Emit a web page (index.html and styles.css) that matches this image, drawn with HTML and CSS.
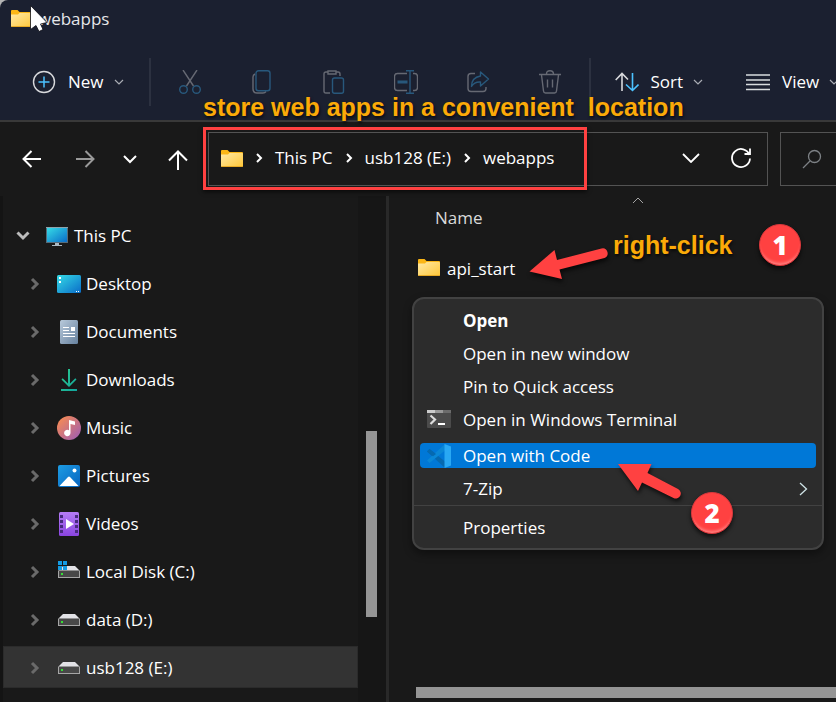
FILE: index.html
```html
<!DOCTYPE html>
<html lang="en">
<head>
<meta charset="utf-8">
<title>webapps</title>
<link rel="stylesheet" href="styles.css">
</head>
<body>
<svg class="defs" aria-hidden="true">
  <defs>
    <linearGradient id="gold" x1="0" y1="0" x2="1" y2="1"><stop offset="0" stop-color="#ffe9a6"/><stop offset="1" stop-color="#ffc738"/></linearGradient>
    <linearGradient id="screen" x1="0" y1="0" x2="1" y2="1"><stop offset="0" stop-color="#35dbe6"/><stop offset="1" stop-color="#0a6cc8"/></linearGradient>
    <linearGradient id="paper" x1="0" y1="0" x2="1" y2="1"><stop offset="0" stop-color="#b9cadb"/><stop offset="1" stop-color="#66819e"/></linearGradient>
    <linearGradient id="green" x1="0" y1="0" x2="1" y2="1"><stop offset="0" stop-color="#2ccb8b"/><stop offset="1" stop-color="#12a59f"/></linearGradient>
    <linearGradient id="note" x1="0" y1="0" x2="1" y2="1"><stop offset="0.1" stop-color="#f58a55"/><stop offset="1" stop-color="#9a5bb8"/></linearGradient>
    <linearGradient id="sky" x1="0" y1="0" x2="1" y2="1"><stop offset="0" stop-color="#1d9de4"/><stop offset="1" stop-color="#0764bf"/></linearGradient>
    <linearGradient id="film" x1="0" y1="0" x2="0" y2="1"><stop offset="0" stop-color="#b57cf5"/><stop offset="1" stop-color="#8a45e0"/></linearGradient>
    <symbol id="folder" viewBox="0 0 22 17"><path d="M0 1q0-1 1-1h5.500l2 2H21q1 0 1 1v4H0z" fill="#fbb616"/><path d="M0 4.500h7l1.500-1.500H21q1 0 1 1v12q0 1-1 1H1q-1 0-1-1z" fill="url(#gold)"/><path d="M.5 16.500h21" stroke="#e8aa25"/></symbol>
    <symbol id="drive" viewBox="0 0 22 14"><path d="M5 1h12l4.500 4.500h-21z" fill="#e2e2e6"/><path d="M0 5.500h22V13H0z" fill="#a6a6a6"/><path d="M1 6h20v6H1z" fill="#484848"/><path d="M3 8h2v2H3z" fill="#35e035"/></symbol>
    <symbol id="caret" viewBox="0 0 10 14"><path d="M2 2l5 5-5 5" fill="none" stroke="currentColor" stroke-width="3"/></symbol>
    <symbol id="down" viewBox="0 0 10 6"><path d="M1 1l4 4 4-4" fill="none" stroke="currentColor" stroke-width="1.200"/></symbol>
    <symbol id="crumb" viewBox="0 0 8 10"><path d="M2 1l4 4-4 4" fill="none" stroke="currentColor" stroke-width="2"/></symbol>
  </defs>
</svg>

<div class="window">
  <header class="titlebar">
    <svg class="ic-folder" aria-hidden="true"><use href="#folder"/></svg>
    <h1>webapps</h1>
    <svg class="cursor" viewBox="0 0 18 27" aria-hidden="true"><path d="M.5.500V24.500L6 20.500 9 26.500l4-2-2.500-5.500 6.500-1.500z" fill="#fff" stroke="#0b0d14" stroke-width=".8"/></svg>
  </header>

  <div class="toolbar" role="toolbar" aria-label="Commands">
    <button class="labelled new" type="button">
      <svg class="ic-24" viewBox="0 0 24 24" aria-hidden="true"><circle cx="12" cy="12" r="10.500" fill="none" stroke="#d8d9dc" stroke-width="1.400"/><path d="M12 6.500v11M6.500 12h11" stroke="#4cc2ff" stroke-width="1.500"/></svg>
      <span>New</span><svg class="ic-down" aria-hidden="true"><use href="#down"/></svg>
    </button>
    <span class="rule"></span>
    <button class="tool" type="button" aria-label="Cut"><svg class="ic-24" viewBox="0 0 24 24" fill="none" stroke-width="1.400"><path d="M5 0l10.500 16M19 0L8.500 16" stroke="#666973"/><circle cx="5.500" cy="19.500" r="3.800" stroke="#28587c"/><circle cx="18.500" cy="19.500" r="3.800" stroke="#28587c"/></svg></button>
    <button class="tool" type="button" aria-label="Copy"><svg class="ic-24" viewBox="0 0 24 24" fill="none" stroke-width="1.400"><path d="M5 4q-2 1-2 3v12q0 4 4 4h6q2 0 3-1.500" stroke="#666973"/><rect x="6" y=".8" width="14" height="20" rx="2.500" stroke="#28587c"/></svg></button>
    <button class="tool" type="button" aria-label="Paste"><svg class="ic-24" viewBox="0 0 24 24" fill="none" stroke-width="1.400"><path d="M8 23H4q-2 0-2-2V4q0-2 2-2h2M14 2h2q2 0 2 2v2M6 1h8v3H6z" stroke="#666973"/><rect x="10.500" y="8" width="11" height="15.200" rx="2" stroke="#28587c"/></svg></button>
    <button class="tool" type="button" aria-label="Rename"><svg class="ic-24" viewBox="0 0 24 24" fill="none" stroke-width="1.400"><path d="M13 3.500H3.500q-3 0-3 3v11q0 3 3 3H13M19 3.500h1.500q3 0 3 3v11q0 3-3 3H19" stroke="#666973"/><path d="M12 .7h8M12 23.300h8M16 1v22" stroke="#28587c"/><path d="M3.500 12h10" stroke="#28587c" stroke-width="3"/></svg></button>
    <button class="tool" type="button" aria-label="Share"><svg class="ic-24" viewBox="0 0 24 24" fill="none" stroke-width="1.400"><path d="M9 3.500H5q-3 0-3 3v12q0 3 3 3h12q3 0 3-3V17" stroke="#666973"/><path d="M14.500 2l8 7-8 7v-4q-6-.5-9 4.500 0-9 9-10.500z" stroke="#28587c" stroke-linejoin="round"/></svg></button>
    <button class="tool" type="button" aria-label="Delete"><svg class="ic-24" viewBox="0 0 24 24" fill="none" stroke="#666973" stroke-width="1.400"><path d="M1 4.500h22M8.500 4q0-3.300 3.500-3.300T15.500 4M3.500 5l2 16q.2 2 2 2h9q1.800 0 2-2l2-16M9.500 9.500v8M14.500 9.500v8"/></svg></button>
    <span class="rule"></span>
    <button class="labelled sort" type="button">
      <svg class="ic-24" viewBox="0 0 24 24" fill="none" stroke-width="1.600" aria-hidden="true"><path d="M7 21V4M.7 10L7 3.500l6 6" stroke="#d8d9dc"/><path d="M17.500 3v17M11 14.500l6.500 6 6-6" stroke="#4cc2ff"/></svg>
      <span>Sort</span><svg class="ic-down" aria-hidden="true"><use href="#down"/></svg>
    </button>
    <button class="labelled view" type="button">
      <svg class="ic-24" viewBox="0 0 24 24" stroke="#d8dcde" stroke-width="1.500" aria-hidden="true"><path d="M0 5h24M0 10h24M0 14.500h24M0 19.500h24"/></svg>
      <span>View</span><svg class="ic-down" aria-hidden="true"><use href="#down"/></svg>
    </button>
    <p class="callout callout-top">store web apps in a convenient&nbsp; location</p>
  </div>

  <div class="navbar">
    <nav class="history" aria-label="History">
      <button type="button" aria-label="Back"><svg class="ic-24" viewBox="0 0 24 24"><path d="M21 12H3.500M11.500 4l-8 8 8 8"/></svg></button>
      <button type="button" class="off" aria-label="Forward"><svg class="ic-24" viewBox="0 0 24 24"><path d="M3 12h17.500M12.500 4l8 8-8 8"/></svg></button>
      <button type="button" aria-label="Recent"><svg class="ic-24" viewBox="0 0 24 24"><path d="M6 9l6 6 6-6"/></svg></button>
      <button type="button" aria-label="Up"><svg class="ic-24" viewBox="0 0 24 24"><path d="M12 23V4.500M3 13.500l9-9 9 9"/></svg></button>
    </nav>
    <div class="address">
      <svg class="ic-folder" aria-hidden="true"><use href="#folder"/></svg>
      <svg class="ic-crumb" aria-hidden="true"><use href="#crumb"/></svg>
      <a href="#pc">This PC</a>
      <svg class="ic-crumb" aria-hidden="true"><use href="#crumb"/></svg>
      <a href="#e">usb128 (E:)</a>
      <svg class="ic-crumb" aria-hidden="true"><use href="#crumb"/></svg>
      <a href="#webapps">webapps</a>
      <span class="spring"></span>
      <button type="button" class="history-drop" aria-label="Previous locations"><svg viewBox="0 0 18 10"><path d="M1 1l8 8 8-8"/></svg></button>
      <button type="button" class="refresh" aria-label="Refresh"><svg viewBox="0 0 22 22"><path d="M19.500 8A9 9 0 1 0 20 11.500M20 1.500V7h-5.500"/></svg></button>
      <span class="frame"></span>
    </div>
    <label class="search"><svg viewBox="0 0 20 20" aria-hidden="true"><circle cx="12.500" cy="7.500" r="6"/><path d="M8 12l-7 7"/></svg><input type="search" aria-label="Search webapps"></label>
  </div>

  <div class="body">
    <aside class="sidebar">
      <ul class="tree">
        <li class="root"><a id="pc" href="#pc"><svg class="twist-open" viewBox="0 0 14 10" aria-hidden="true"><path d="M1.500 1.500L7 7l5.500-5.500"/></svg>
          <svg class="ic-24" viewBox="0 0 24 24" aria-hidden="true"><path d="M1 3h22v16H1z" fill="#566b7a"/><path d="M1 3h22v1H1z" fill="#8ea3ac"/><path d="M2 4h20v14H2z" fill="url(#screen)"/><path d="M10 19h4v2h3v1H7v-1h3z" fill="#aab8c2"/></svg><span>This PC</span></a></li>
        <li><a href="#desktop"><svg class="twist" aria-hidden="true"><use href="#caret"/></svg><svg class="ic-24" viewBox="0 0 24 24" aria-hidden="true"><rect y="3" width="24" height="18" rx="1.500" fill="url(#screen)"/><path d="M2 5h2v2H2zM2 9h2v2H2zM19 19h1v1h-1zM21 19h1v1h-1z" fill="#fff"/></svg><span>Desktop</span></a></li>
        <li><a href="#documents"><svg class="twist" aria-hidden="true"><use href="#caret"/></svg><svg class="ic-24" viewBox="0 0 24 24" aria-hidden="true"><rect x="3" width="18" height="24" rx="1.500" fill="url(#paper)"/><path d="M6 7.500h6M6 10.500h6M6 13.500h12M6 16.500h12" stroke="#fff"/><path d="M14 7h4v4h-4z" fill="#fff"/></svg><span>Documents</span></a></li>
        <li><a href="#downloads"><svg class="twist" aria-hidden="true"><use href="#caret"/></svg><svg class="ic-24" viewBox="0 0 24 24" aria-hidden="true"><path d="M11 1h2v14.500l5.300-5.300 1.200 1.400L12 19l-7.500-7.400 1.200-1.400 5.300 5.300zM4 21h16v2H4z" fill="url(#green)"/></svg><span>Downloads</span></a></li>
        <li><a href="#music"><svg class="twist" aria-hidden="true"><use href="#caret"/></svg><svg class="ic-24" viewBox="0 0 24 24" aria-hidden="true"><circle cx="12" cy="12" r="12" fill="url(#note)"/><path d="M12 4l6 1.500V9l-4.500-1v9A3.200 3.200 0 1 1 12 14.300z" fill="#fff"/></svg><span>Music</span></a></li>
        <li><a href="#pictures"><svg class="twist" aria-hidden="true"><use href="#caret"/></svg><svg class="ic-24" viewBox="0 0 24 24" aria-hidden="true"><rect x="1" y="1" width="22" height="22" rx="2" fill="url(#sky)"/><path d="M2.500 22L11 13q1-1 2 0l8.500 9z" fill="#fff"/><circle cx="17.500" cy="6.500" r="2" fill="#fff"/></svg><span>Pictures</span></a></li>
        <li><a href="#videos"><svg class="twist" aria-hidden="true"><use href="#caret"/></svg><svg class="ic-24" viewBox="0 0 24 24" aria-hidden="true"><rect x="2" width="20" height="24" rx="1.500" fill="url(#film)"/><path d="M3 3h3v3H3zM3 8h3v3H3zM3 13h3v3H3zM3 18h3v3H3zM18 3h3v3h-3zM18 8h3v3h-3zM18 13h3v3h-3zM18 18h3v3h-3z" fill="#482a7e"/><path d="M9 7l8 5-8 5z" fill="#fff"/></svg><span>Videos</span></a></li>
        <li><a href="#c"><svg class="twist" aria-hidden="true"><use href="#caret"/></svg><svg class="ic-24" viewBox="0 0 24 24" aria-hidden="true"><use href="#drive" x="1" y="5" width="22" height="14"/><path d="M1 1h4v4H1zM6 1h4v4H6zM1 6h4v4H1zM6 6h4v4H6z" fill="#149be3"/></svg><span>Local Disk (C:)</span></a></li>
        <li><a href="#d"><svg class="twist" aria-hidden="true"><use href="#caret"/></svg><svg class="ic-24" viewBox="0 0 24 24" aria-hidden="true"><use href="#drive" x="1" y="5" width="22" height="14"/></svg><span>data (D:)</span></a></li>
        <li><a id="e" class="selected" href="#e"><svg class="twist" aria-hidden="true"><use href="#caret"/></svg><svg class="ic-24" viewBox="0 0 24 24" aria-hidden="true"><use href="#drive" x="1" y="5" width="22" height="14"/></svg><span>usb128 (E:)</span></a></li>
      </ul>
      <div class="track"><span class="thumb"></span></div>
    </aside>

    <main class="files">
      <table>
        <thead><tr><th scope="col">Name<svg class="sorted" viewBox="0 0 12 7" aria-hidden="true"><path d="M1 6l5-5 5 5"/></svg></th></tr></thead>
        <tbody><tr><td><span class="file"><svg class="ic-folder" aria-hidden="true"><use href="#folder"/></svg><span>api_start</span></span></td></tr></tbody>
      </table>
      <div class="hscroll"></div>

      <div class="menu" role="menu">
        <button type="button" role="menuitem" class="default">Open</button>
        <button type="button" role="menuitem">Open in new window</button>
        <button type="button" role="menuitem">Pin to Quick access</button>
        <button type="button" role="menuitem"><svg class="ic-24" viewBox="0 0 24 24" aria-hidden="true"><rect y="2" width="24" height="18" rx="1" fill="#4b4b4b"/><path d="M0 2h8v3H0z" fill="#ccc"/><path d="M8 2h8v3H8z" fill="#999"/><path d="M16 2h8v3h-8z" fill="#6c6c6c"/><path d="M3.500 7.500l4.500 4-4.500 4.500" fill="none" stroke="#ddd" stroke-width="2.200"/><path d="M11 15h7v2h-7z" fill="#fff"/></svg>Open in Windows Terminal</button>
        <button type="button" role="menuitem" class="active"><svg class="ic-24" viewBox="0 0 24 24" aria-hidden="true"><path d="M0 7.500L2.500 5 18 17.500V24z" fill="#0569b0"/><path d="M0 16.500L2.500 19 18 6.500V0z" fill="#0a87d6"/><path d="M0 7.500L2.500 5l6.500 5-3 2.300z" fill="#0569b0"/><path d="M17.500 0L24 2.500v19L17.500 24z" fill="#29a8f3"/></svg>Open with Code</button>
        <button type="button" role="menuitem">7-Zip<svg class="more" viewBox="0 0 9 14" aria-hidden="true"><path d="M1 1l6.500 6L1 13"/></svg></button>
        <hr>
        <button type="button" role="menuitem" class="last">Properties</button>
        <svg class="arrow arrow-two" viewBox="0 0 70 40" aria-hidden="true"><path d="M2 4h33.500l-4 9 30.500 16a5 5 0 0 1-4.500 9L26 22.500 22 31z"/></svg>
        <span class="badge badge-two">2</span>
      </div>

      <svg class="arrow arrow-one" viewBox="0 0 84 36" aria-hidden="true"><path d="M1.500 25.500L26.500 4l2.500 10L73.500 2.500a5 5 0 0 1 3 9.500L31.500 23.500 34 33z"/></svg>
      <p class="callout callout-click">right-click</p>
      <span class="badge badge-one">1</span>
    </main>
  </div>
</div>
</body>
</html>
```

FILE: styles.css
```css
* { box-sizing: border-box; }

body {
  margin: 0;
  background: #191919;
  color: #fff;
  font: 17px/24px "Open Sans", "Noto Sans", sans-serif;
  overflow: hidden;
}

button, input {
  margin: 0;
  padding: 0;
  border: 0;
  background: none;
  color: inherit;
  font: inherit;
}

a { color: inherit; text-decoration: none; }
svg { display: block; flex: none; }

.defs { position: absolute; width: 0; height: 0; }
.ic-24 { width: 24px; height: 24px; }
.ic-folder { width: 22px; height: 17px; }
.ic-down { width: 10px; height: 6px; color: #a9acb3; }
.ic-crumb { width: 8px; height: 10px; }

.window {
  display: flex;
  flex-direction: column;
  min-height: 100vh;
  background: #b4b4b4;
}

/* Title bar */
.titlebar {
  position: relative;
  display: flex;
  align-items: center;
  gap: 5px;
  height: 42px;
  padding: 0 11px 4px;
  border-top-left-radius: 8px;
  background: #1b2030;
}

.titlebar .ic-folder { margin-bottom: 2px; }

.titlebar h1 {
  margin: 0;
  color: #e6e7ea;
  font-size: 17px;
  font-weight: 400;
}

.cursor {
  position: absolute;
  left: 30px;
  top: 5px;
  width: 18px;
  height: 27px;
}

/* Command bar */
.toolbar {
  position: relative;
  display: flex;
  align-items: center;
  height: 80px;
  padding-top: 2px;
  border-bottom: 2px solid #393939;
  background: #1b2030;
  white-space: nowrap;
}

.labelled {
  display: flex;
  align-items: center;
  gap: 12px;
  flex: none;
  font-weight: 500;
}

.labelled .ic-down { margin-left: -2px; }
.new { padding: 0 25px 0 32px; }
.sort { padding-left: 24px; }
.view { padding-left: 43px; }

.rule {
  flex: none;
  width: 2px;
  height: 48px;
  background: #2c3140;
}

.tool {
  display: flex;
  justify-content: center;
  flex: none;
  width: 72px;
}

.rule + .tool { margin-left: 3px; }
.tool + .rule { margin-left: 3px; }

/* Address row */
.navbar {
  display: flex;
  align-items: center;
  height: 74px;
  background: #191919;
}

.history {
  display: flex;
  gap: 24px;
  width: 208px;
  padding-left: 20px;
}

.history path {
  fill: none;
  stroke: #fff;
  stroke-width: 2;
}

.history .off { margin-left: 5px; margin-right: -3px; }
.history .off path { stroke: #9a9a9a; }

.address {
  position: relative;
  display: flex;
  align-items: center;
  flex: 1;
  gap: 12px;
  height: 54px;
  padding: 0 15px 2px 12px;
  border: 1px solid #535353;
  white-space: nowrap;
}

.address .spring { flex: 1; }
.address button path { fill: none; stroke: #fff; stroke-width: 1.8; }
.history-drop svg { width: 18px; height: 10px; }
.refresh { margin-left: 18px; }
.refresh svg { width: 22px; height: 22px; }

.frame {
  position: absolute;
  left: -6px;
  top: -6px;
  width: 384px;
  height: 63px;
  border: 3px solid #ff4141;
  box-shadow: 0 2px 4px #0009;
}

.search {
  display: flex;
  align-items: center;
  gap: 12px;
  width: 56px;
  height: 54px;
  margin-left: 12px;
  padding-left: 21px;
  border: 1px solid #535353;
  border-right: 0;
  overflow: hidden;
}

.search svg { width: 20px; height: 20px; fill: none; stroke: #7d8185; stroke-width: 1.3; }
.search input { width: 100%; min-width: 0; outline: 0; }

/* Navigation pane */
.body { display: flex; flex: 1; background: #191919; }

.sidebar {
  display: flex;
  width: 389px;
  border-left: 3px solid #141414;
  border-right: 3px solid #292929;
}

.tree {
  display: flex;
  flex-direction: column;
  flex: 1;
  gap: 6px;
  margin: 0;
  padding: 18px 0 0;
  list-style: none;
}

.tree a {
  display: flex;
  align-items: center;
  height: 42px;
  padding: 1px 0 0 27px;
}

.tree .root a { padding-left: 13px; }
.tree a.selected { background: #333; box-shadow: inset 0 0 0 1px #2b2b2b; }
.tree span { margin-left: 5px; }

.twist { width: 10px; height: 14px; margin-right: 17px; color: #6a6a6a; }
.twist-open { width: 14px; height: 10px; margin-right: 15px; fill: none; stroke: #bbb; stroke-width: 3; }

.track {
  width: 28px;
  padding: 235px 8px 0;
  background: #161616;
}

.thumb { display: block; width: 11px; height: 186px; background: #959595; }

/* File list */
.files {
  position: relative;
  display: flex;
  flex-direction: column;
  flex: 1;
}

.files table { width: 100%; border-collapse: collapse; }

.files th {
  position: relative;
  height: 43px;
  padding: 0 0 0 46px;
  color: #dadada;
  font-weight: 400;
  text-align: left;
}

.files td { height: 60px; padding: 0 0 0 29px; }
.file { display: flex; align-items: center; gap: 7px; }
.file .ic-folder { margin-bottom: 4px; }

.sorted {
  position: absolute;
  left: 243px;
  top: 1px;
  width: 12px;
  height: 7px;
  fill: none;
  stroke: #a5a5a5;
}

.hscroll {
  height: 11px;
  margin: auto 0 4px 27px;
  background: #959595;
}

/* Context menu */
.menu {
  position: absolute;
  left: 23px;
  right: 12px;
  top: 101px;
  display: flex;
  flex-direction: column;
  padding: 5px 0 4px;
  border: 2px solid #424242;
  border-radius: 12px;
  background: #2c2c2c;
  box-shadow: 0 4px 8px #0006;
}

.menu button {
  position: relative;
  display: flex;
  align-items: center;
  height: 33px;
  padding-left: 49px;
  text-align: left;
}

.menu .ic-24 { margin: 0 12px 0 -36px; }
.menu .default { font-weight: 700; }

.menu .active {
  height: 25px;
  margin: 7px 6px 4px;
  padding-left: 43px;
  border-radius: 4px;
  background: #0078d7;
}

.menu .more {
  width: 9px;
  height: 14px;
  margin-left: auto;
  margin-right: 14px;
  fill: none;
  stroke: #cfe3e6;
  stroke-width: 1.3;
}

.menu hr { width: 100%; margin: 0; border: 0; border-top: 1px solid #424242; }
.menu .last { margin-top: 5px; }

/* Annotations */
.callout {
  position: absolute;
  margin: 0;
  color: #fbaa08;
  font: bold 25px/28px "Liberation Sans", sans-serif;
  text-shadow: 1px 2px 3px #000a;
  white-space: nowrap;
}

.callout-top { left: 203px; top: 51px; z-index: 1; }
.callout-click { left: 224px; top: 35px; }

.arrow { position: absolute; fill: #ff4141; filter: drop-shadow(1px 3px 2px #000a); }
.arrow-one { left: 139px; top: 50px; width: 84px; height: 36px; }
.arrow-two { left: 202px; top: 161px; width: 70px; height: 40px; }

.badge {
  position: absolute;
  width: 42px;
  height: 42px;
  border: 1px solid #d8383c;
  border-radius: 50%;
  background: #ff4141;
  box-shadow: 0 3px 4px #000a, inset 0 -4px 3px -2px #ff8080;
  font-size: 26px;
  font-weight: 800;
  line-height: 40px;
  text-align: center;
}

.badge-one { left: 370px; top: 28px; }
.badge-two { left: 277px; top: 193px; }
```
